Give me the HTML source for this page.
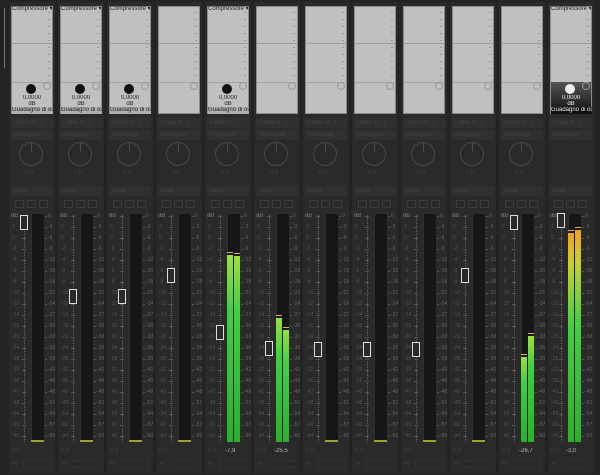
<!DOCTYPE html><html><head><meta charset="utf-8"><style>
*{margin:0;padding:0;box-sizing:border-box}
body{width:600px;height:475px;background:#1e1e1e;position:relative;overflow:hidden;font-family:"Liberation Sans",sans-serif}
.a{position:absolute}
.t{font-size:6px;line-height:7px;white-space:nowrap;overflow:hidden}
</style></head><body>
<div class="a" style="left:0;top:0;width:600px;height:475px;background:#232323"></div>
<div class="a" style="left:4px;top:8px;width:1px;height:60px;background:#777"></div>
<div id="r"></div>
<script>
var h='';
var fad=[222,296,296,275,332,348,349,349,349,275,222,220];
var comp=[1,1,1,0,1,0,0,0,0,0,0,2];
var vals=['','','','','-7,9','-25,5','','','','','-26,7','-3,0'];
var meters={4:[[255,256]],5:[[318,330]],10:[[357,336]],11:[[233,230]]};
var rl=['0','-3','-6','-9','-12','-15','-18','-21','-24','-27','-30','-33','-36','-39','-42','-45','-48','-51','-54','-57','-60'];
var ll=['4','2','0','-2','-4','-6','-8','-10','-12','-14','-16','-20','-24','-28','-32','-36','-40','-48','-54','-60','-inf'];
function d(x,y,w,hh,st){h+='<div class="a" style="left:'+x+'px;top:'+y+'px;width:'+w+'px;height:'+hh+'px;'+st+'"></div>';}
function t(x,y,s,st){h+='<div class="a t" style="left:'+x+'px;top:'+y+'px;'+st+'">'+s+'</div>';}
for(var i=0;i<12;i++){
var c=11+49*i;
d(c-2,2,46,472,'background:#2a2a2a');
d(c,6,42,108,'background:#c0c0c0;border:1px solid #8a8a8a');
d(c+1,43,40,1,'background:#9c9c9c');d(c+1,82,40,1,'background:#a4a4a4');
for(var k=0;k<10;k++)d(c+37,12+k*7,2,1,'background:#999');
if(comp[i]==2){d(c+1,82,40,31,'background:linear-gradient(#555,#111)');}
if(comp[i]){t(c+1,6,'Compressore ▾','color:#222;width:40px');
var kc=comp[i]==2?'#eee':'#111',tc=comp[i]==2?'#eee':'#222';
d(c+15,84,10,10,'border-radius:50%;background:'+kc);
t(c+8,95,'0,0000','color:'+tc+';width:26px;text-align:center');
t(c+8,101,'dB','color:'+tc+';width:26px;text-align:center');
t(c+1,107,'Guadagno di outp▾','color:'+tc+';width:41px;background:'+(comp[i]==2?'#111':'#b0b0b0'));}
d(c+32,82,8,8,'border-radius:50%;border:1px solid #999');
d(c,118,42,10,'background:#303030');t(c+3,120,'Linea 1(...)','color:#444');
d(c,130,42,10,'background:#303030');t(c+3,132,'Principale','color:#444');
if(i<11){d(c+8,142,24,24,'border-radius:50%;border:1.5px solid #4a4a4a');d(c+20,143,1,9,'background:#4a4a4a');t(c+14,170,'0,0','color:#444');}
d(c,186,42,10,'background:#303030');t(c+3,188,'Lega','color:#444');
for(var b=0;b<3;b++)d(c+4+b*12,200,9,8,'border:1px solid #3c3c3c');
var mx=i==11?c+18:c+20;
d(mx,213,14,229,'background:#161616;border:1px solid #2e2e2e');
d(mx-7,215,1,227,'border-left:1px dotted #666');
for(var k=0;k<21;k++){var y=216+k*11;t(mx+17,y-3,rl[k],'color:#666;font-size:5px');d(mx+14,y,2,1,'background:#555');t(c+1,y-3,ll[k],'color:#555;font-size:5px');d(mx-9,y,4,1,'background:#555');}
t(c,213,'dB','color:#777');
if(meters[i]){meters[i].forEach(function(m){for(var q=0;q<2;q++){var top=m[q];var bg=i==11?'linear-gradient(#f2a020 0%,#c8d030 15%,#40d040 45%,#2cb02c)':'linear-gradient(#9ae040,#3fd03f 30%,#2ab02a)';d(mx+q*7,top,6,442-top,'background:'+bg);d(mx+q*7,top-3,6,1,'background:#e0b040');}})}
else d(mx,440,13,2,'background:#a0a030');
d(mx-11,fad[i]-7,8,15,'border:1px solid #ddd;background:#2a2a2a');
t(c+1,448,'0,0','color:#444');
if(vals[i])t(mx-2,448,vals[i],'color:#bbb');
t(c+1,461,'Ai','color:#444');d(c+12,460,28,8,'border:1px solid #333');
}
document.getElementById('r').innerHTML=h;
</script>
</body></html>
